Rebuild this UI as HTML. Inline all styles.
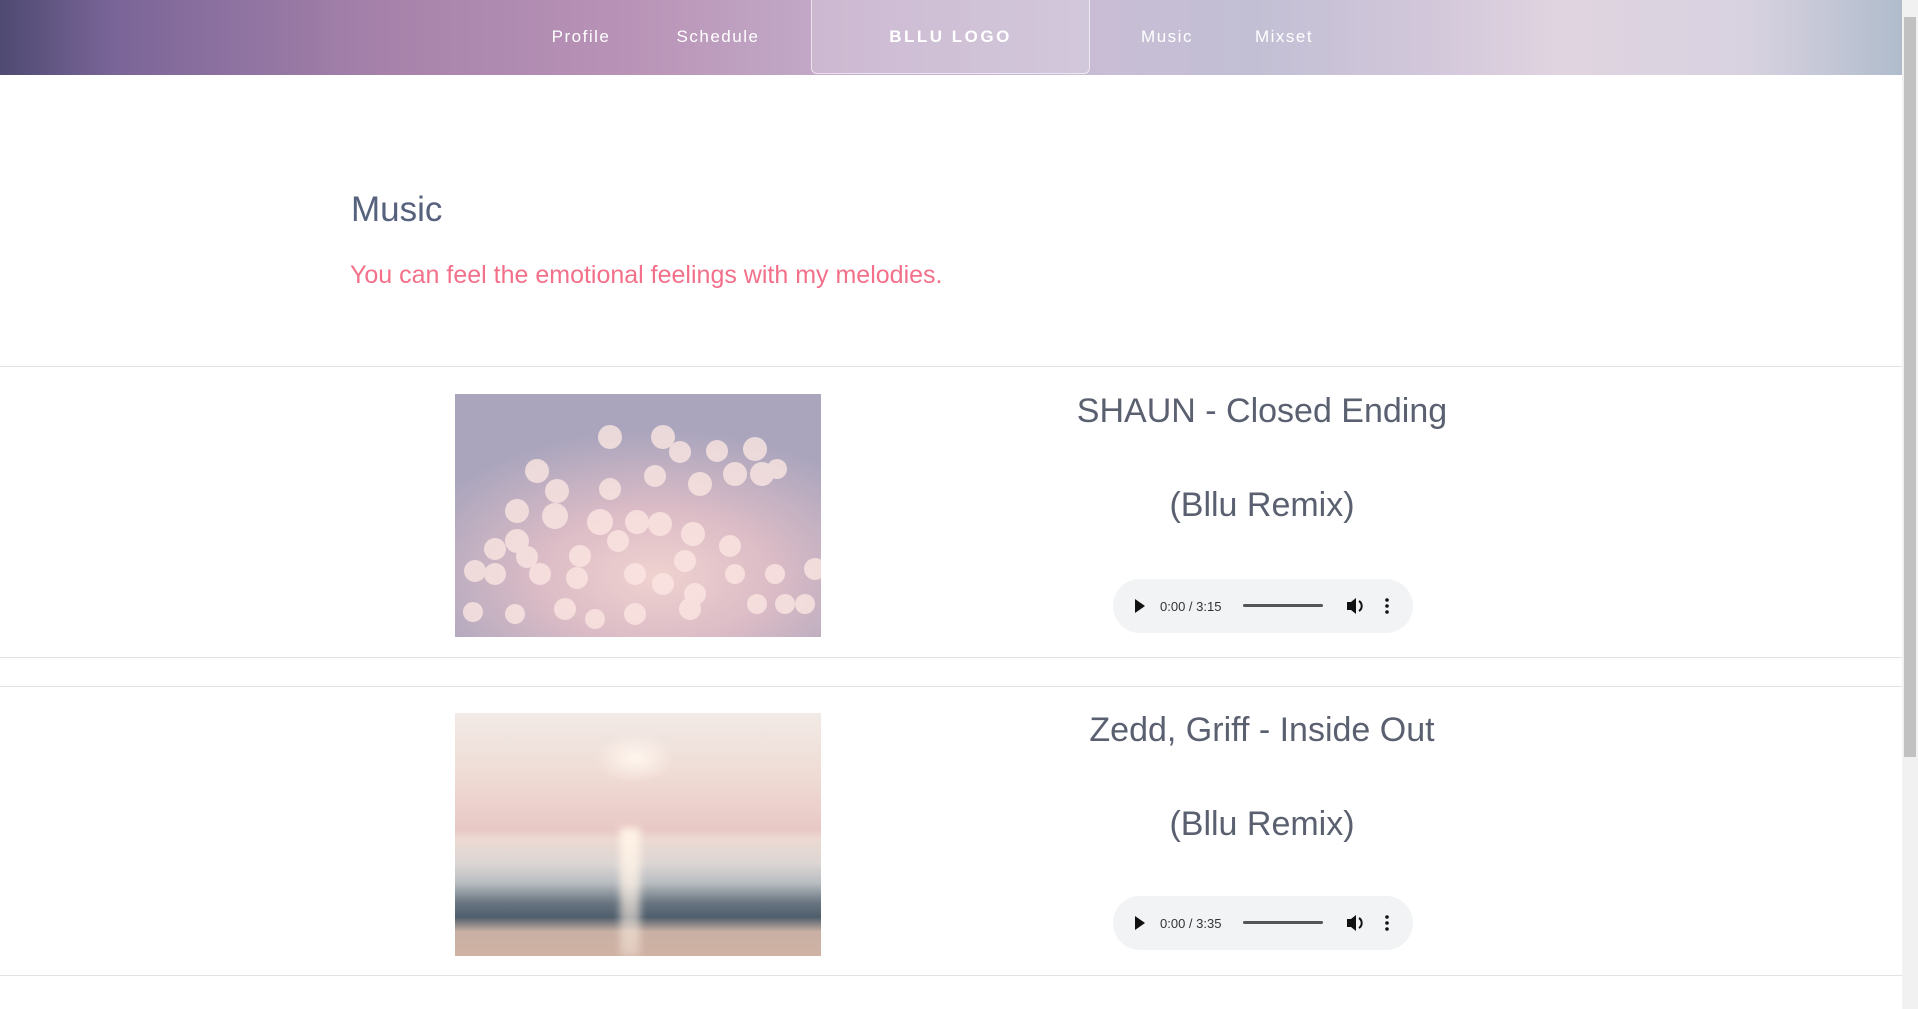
<!DOCTYPE html>
<html><head><meta charset="utf-8"><style>
*{margin:0;padding:0;box-sizing:border-box}
html,body{width:1918px;height:1009px;overflow:hidden;background:#fff;font-family:"Liberation Sans",sans-serif}
.hdr{position:absolute;left:0;top:0;width:1902px;height:75px;background:linear-gradient(90deg,#4e4a72 0%,#7a6598 6%,#a682aa 20%,#b993b7 33%,#c4adca 45%,#c8bdd4 58%,#c2bfd4 66%,#d2c7da 75%,#e0d4e0 82%,#d8d2e0 92%,#b0bccc 100%)}
.nav{position:absolute;top:27px;color:#fff;font-size:17px;letter-spacing:1.5px;transform:translateX(-50%)}
.logo{position:absolute;left:811px;top:-2px;width:279px;height:76px;border:1px solid rgba(255,255,255,.6);border-radius:0 0 6px 6px;background:rgba(255,255,255,.18);color:#fff;font-weight:bold;font-size:17px;letter-spacing:2.5px;text-align:center;line-height:76px}
.sb{position:absolute;right:0;top:0;width:16px;height:1009px;background:#f1f1f1}
.sb div{position:absolute;left:2px;top:17px;width:12px;height:740px;background:#c1c1c1}
h1{position:absolute;left:351px;top:190px;font-weight:normal;font-size:35px;color:#56617e}
.sub{position:absolute;left:350px;top:261px;font-size:25px;color:#f2708a}
.hr{position:absolute;left:0;width:1902px;height:1px;background:#e2e2e2}
.img{position:absolute;left:455px;width:366px;height:243px;overflow:hidden}
.t{position:absolute;left:1012px;width:500px;text-align:center;font-size:34px;color:#5a6070}
.au{position:absolute;left:1113px;width:300px;height:54px;border-radius:27px;background:#f1f3f4;font-size:13px;color:#333}
</style></head><body>
<div class="hdr"></div>
<div class="nav" style="left:581px">Profile</div>
<div class="nav" style="left:718px">Schedule</div>
<div class="logo">BLLU LOGO</div>
<div class="nav" style="left:1167px">Music</div>
<div class="nav" style="left:1284px">Mixset</div>
<div class="sb"><div></div></div>
<h1>Music</h1>
<div class="sub">You can feel the emotional feelings with my melodies.</div>
<div class="hr" style="top:366px"></div>
<div class="img" style="top:394px;background:radial-gradient(ellipse 70% 60% at 55% 75%,#f0d2d0 0%,#dcbcc6 45%,#aaa5bd 100%)">
<svg width="366" height="243"><g fill="#fbe6e2" opacity=".8">
<circle cx="82" cy="77" r="12"/><circle cx="102" cy="97" r="12"/><circle cx="155" cy="95" r="11"/><circle cx="62" cy="117" r="12"/><circle cx="100" cy="122" r="13"/><circle cx="145" cy="128" r="13"/><circle cx="182" cy="128" r="12"/><circle cx="205" cy="130" r="12"/><circle cx="238" cy="140" r="12"/><circle cx="62" cy="147" r="12"/><circle cx="40" cy="155" r="11"/><circle cx="72" cy="163" r="11"/><circle cx="125" cy="162" r="11"/><circle cx="163" cy="147" r="11"/><circle cx="230" cy="167" r="11"/><circle cx="275" cy="152" r="11"/><circle cx="320" cy="180" r="10"/><circle cx="20" cy="177" r="11"/><circle cx="40" cy="180" r="11"/><circle cx="85" cy="180" r="11"/><circle cx="122" cy="184" r="11"/><circle cx="180" cy="180" r="11"/><circle cx="208" cy="190" r="11"/><circle cx="240" cy="200" r="11"/><circle cx="280" cy="180" r="10"/><circle cx="360" cy="175" r="11"/><circle cx="155" cy="43" r="12"/><circle cx="208" cy="43" r="12"/><circle cx="225" cy="58" r="11"/><circle cx="262" cy="57" r="11"/><circle cx="300" cy="55" r="12"/><circle cx="280" cy="80" r="12"/><circle cx="307" cy="80" r="12"/><circle cx="322" cy="75" r="10"/><circle cx="200" cy="82" r="11"/><circle cx="245" cy="90" r="12"/><circle cx="18" cy="218" r="10"/><circle cx="110" cy="215" r="11"/><circle cx="180" cy="220" r="11"/><circle cx="235" cy="215" r="11"/><circle cx="302" cy="210" r="10"/><circle cx="350" cy="210" r="10"/><circle cx="330" cy="210" r="10"/><circle cx="60" cy="220" r="10"/><circle cx="140" cy="225" r="10"/>
</g></svg></div>
<div class="t" style="top:392px">SHAUN - Closed Ending</div>
<div class="t" style="top:486px">(Bllu Remix)</div>
<div class="au" style="top:579px">
<svg width="300" height="54"><path d="M22 20 L22 34 L32 27Z" fill="#111"/><text x="47" y="32" font-family="Liberation Sans" font-size="13" fill="#333">0:00 / 3:15</text><rect x="130" y="25" width="80" height="3" rx="1.5" fill="#555"/><path d="M234 23h4l5-4v16l-5-4h-4z" fill="#111"/><path d="M246 22a6 6 0 0 1 0 10" stroke="#111" stroke-width="2" fill="none"/><circle cx="274" cy="21" r="1.8" fill="#111"/><circle cx="274" cy="27" r="1.8" fill="#111"/><circle cx="274" cy="33" r="1.8" fill="#111"/></svg></div>
<div class="hr" style="top:657px"></div>
<div class="hr" style="top:686px"></div>
<div class="img" style="top:713px;background:linear-gradient(180deg,#f1eae6 0%,#f0dcd5 25%,#e8c8c5 48%,#ecd9d2 52%,#dcd6d4 62%,#b8bcc0 70%,#6a7682 78%,#4f5e6c 84%,#c9b0a4 90%,#cfb2a3 100%)">
<div style="position:absolute;left:140px;top:20px;width:80px;height:50px;border-radius:50%;background:radial-gradient(#fff6ee,rgba(255,240,230,0) 70%)"></div>
<div style="position:absolute;left:165px;top:115px;width:20px;height:128px;background:linear-gradient(#fff3e6,rgba(255,240,230,.4));filter:blur(4px)"></div></div>
<div class="t" style="top:711px">Zedd, Griff - Inside Out</div>
<div class="t" style="top:805px">(Bllu Remix)</div>
<div class="au" style="top:896px">
<svg width="300" height="54"><path d="M22 20 L22 34 L32 27Z" fill="#111"/><text x="47" y="32" font-family="Liberation Sans" font-size="13" fill="#333">0:00 / 3:35</text><rect x="130" y="25" width="80" height="3" rx="1.5" fill="#555"/><path d="M234 23h4l5-4v16l-5-4h-4z" fill="#111"/><path d="M246 22a6 6 0 0 1 0 10" stroke="#111" stroke-width="2" fill="none"/><circle cx="274" cy="21" r="1.8" fill="#111"/><circle cx="274" cy="27" r="1.8" fill="#111"/><circle cx="274" cy="33" r="1.8" fill="#111"/></svg></div>
<div class="hr" style="top:975px"></div>
</body></html>
